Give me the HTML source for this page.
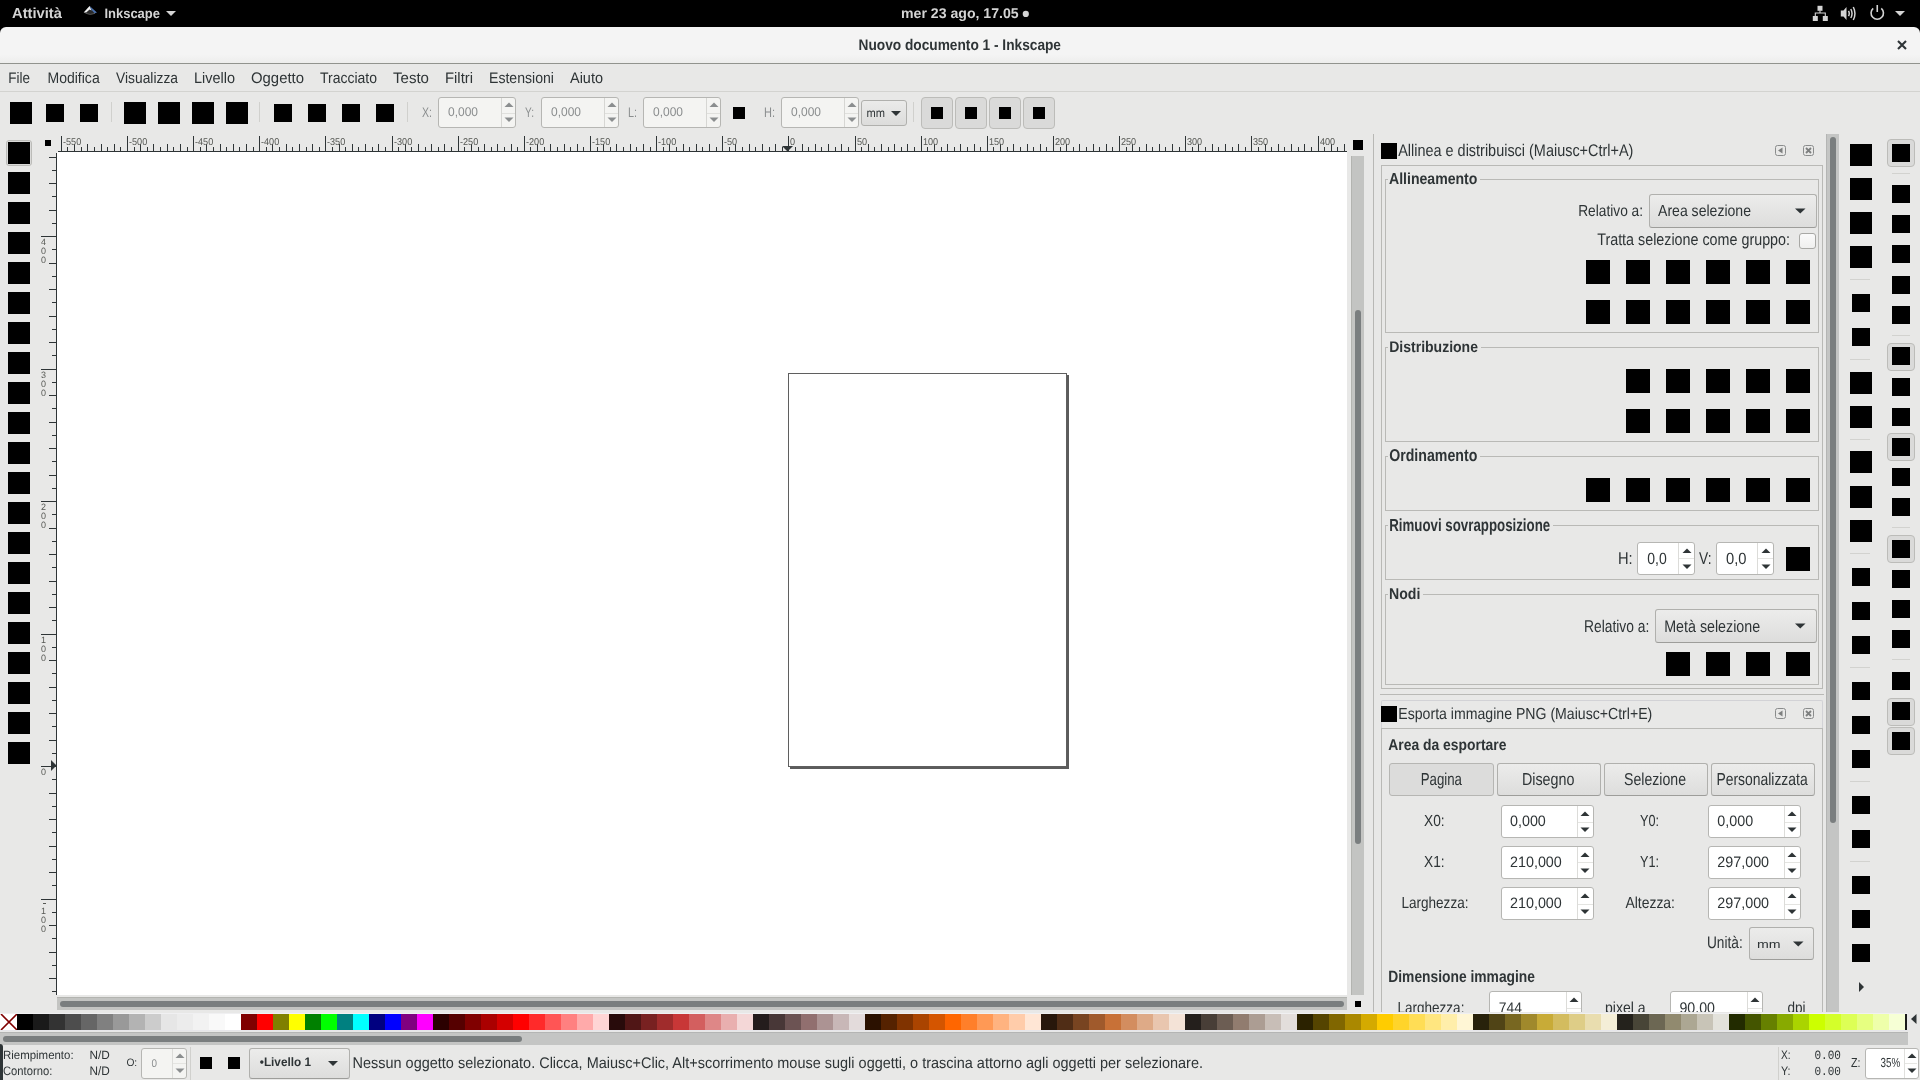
<!DOCTYPE html><html><head><meta charset="utf-8"><style>
html,body{margin:0;padding:0;}
body{width:1920px;height:1080px;overflow:hidden;position:relative;background:#e8e8e7;font-family:'Liberation Sans',sans-serif;}
body>*{position:absolute;margin:0;}
body{text-rendering:geometricPrecision;}
</style></head><body>
<div style="left:0px;top:0px;width:1920px;height:34px;background:#000;"></div>
<svg style="left:83px;top:5px;" width="15" height="12" viewBox="0 0 15 12"><path d="M6.6 1.1 L13.9 7.6 Q7 11.5 0.7 7.4 Z" fill="#2a2a2a"/><path d="M6.6 1.1 L0.7 7.4 L3.2 7.6 L6.6 4.6 L8.6 5.6 Z" fill="#f2f2f2"/><path d="M6.6 1.1 L13.9 7.6 L11.6 8.2 L8.4 4.8 Z" fill="#4a72b0"/><path d="M2.5 8.2 Q7 10.5 12 8.4" stroke="#555" stroke-width="1" fill="none"/></svg>
<svg style="left:166px;top:11px;" width="10" height="6" viewBox="0 0 10 6"><path d="M0 0 H10 L5 5 Z" fill="#d4d4d4"/></svg>
<svg style="left:1022px;top:10px;" width="8" height="8" viewBox="0 0 8 8"><circle cx="3.8" cy="3.9" r="3.1" fill="#d4d4d4"/></svg>
<svg style="left:1812px;top:5px;" width="17" height="17" viewBox="0 0 17 17"><rect x="5.5" y="0.8" width="5" height="5" fill="#d4d4d4"/><rect x="0.8" y="11" width="5" height="5" fill="#d4d4d4"/><rect x="10.8" y="11" width="5" height="5" fill="#d4d4d4"/><path d="M8 5.5 V8 M3.3 11 V8 H13.3 V11" stroke="#d4d4d4" stroke-width="1.1" fill="none"/></svg>
<svg style="left:1840px;top:6px;" width="17" height="15" viewBox="0 0 17 15"><path d="M0.8 4.5 H3.5 L6.5 1 V14 L3.5 10.5 H0.8 Z" fill="#d4d4d4"/><path d="M8.5 4.8 Q10 7.5 8.5 10.2 M10.8 3 Q13.3 7.5 10.8 12 M13.3 1 Q16.6 7.5 13.3 14" stroke="#d4d4d4" stroke-width="1.5" fill="none"/></svg>
<svg style="left:1869px;top:4px;" width="17" height="17" viewBox="0 0 17 17"><path d="M4.2 4.3 A6.2 6.2 0 1 0 12.3 4.3" stroke="#d4d4d4" stroke-width="1.6" fill="none"/><path d="M8.25 1 V8" stroke="#d4d4d4" stroke-width="1.6"/></svg>
<svg style="left:1895px;top:11px;" width="10" height="6" viewBox="0 0 10 6"><path d="M0 0 H10 L5 5 Z" fill="#d4d4d4"/></svg>
<div style="left:0px;top:27px;width:1920px;height:37px;background:linear-gradient(#f4f4f4 75%,#ececeb);border-radius:6px 6px 0 0;"></div>
<div style="left:0px;top:63px;width:1920px;height:1px;background:#91938e;"></div>
<svg style="left:1897px;top:40px;" width="10" height="10" viewBox="0 0 10 10"><path d="M1 1 L9 9 M9 1 L1 9" stroke="#2e3436" stroke-width="2.1"/></svg>
<div style="left:0px;top:91px;width:1920px;height:1px;background:#d3d3d0;"></div>
<div style="left:10px;top:102px;width:22px;height:22px;background:#000;"></div>
<div style="left:46px;top:104px;width:18px;height:18px;background:#000;"></div>
<div style="left:80px;top:104px;width:18px;height:18px;background:#000;"></div>
<div style="left:124px;top:102px;width:22px;height:22px;background:#000;"></div>
<div style="left:158px;top:102px;width:22px;height:22px;background:#000;"></div>
<div style="left:192px;top:102px;width:22px;height:22px;background:#000;"></div>
<div style="left:226px;top:102px;width:22px;height:22px;background:#000;"></div>
<div style="left:274px;top:104px;width:18px;height:18px;background:#000;"></div>
<div style="left:308px;top:104px;width:18px;height:18px;background:#000;"></div>
<div style="left:342px;top:104px;width:18px;height:18px;background:#000;"></div>
<div style="left:376px;top:104px;width:18px;height:18px;background:#000;"></div>
<div style="left:111px;top:102px;width:1px;height:20px;background:#d0d0cd;"></div>
<div style="left:259px;top:102px;width:1px;height:20px;background:#d0d0cd;"></div>
<div style="left:407px;top:102px;width:1px;height:20px;background:#d0d0cd;"></div>
<div style="left:913px;top:102px;width:1px;height:20px;background:#d0d0cd;"></div>
<div style="left:438px;top:97px;width:78px;height:31px;box-sizing:border-box;border:1px solid #b6b6b3;background:#f4f4f2;border-radius:3px;"></div>
<div style="left:501px;top:98px;width:1px;height:29px;background:#d6d6d3;"></div>
<div style="left:502px;top:112.5px;width:13px;height:1px;background:#e0e0dd;"></div>
<svg style="left:503.5px;top:102px;" width="10" height="6" viewBox="0 0 10 6"><path d="M0.5 5 L5 0.5 L9.5 5 Z" fill="#8b8e8f"/></svg>
<svg style="left:503.5px;top:117px;" width="10" height="6" viewBox="0 0 10 6"><path d="M0.5 0.5 L5 5 L9.5 0.5 Z" fill="#8b8e8f"/></svg>
<div style="left:541px;top:97px;width:78px;height:31px;box-sizing:border-box;border:1px solid #b6b6b3;background:#f4f4f2;border-radius:3px;"></div>
<div style="left:604px;top:98px;width:1px;height:29px;background:#d6d6d3;"></div>
<div style="left:605px;top:112.5px;width:13px;height:1px;background:#e0e0dd;"></div>
<svg style="left:606.5px;top:102px;" width="10" height="6" viewBox="0 0 10 6"><path d="M0.5 5 L5 0.5 L9.5 5 Z" fill="#8b8e8f"/></svg>
<svg style="left:606.5px;top:117px;" width="10" height="6" viewBox="0 0 10 6"><path d="M0.5 0.5 L5 5 L9.5 0.5 Z" fill="#8b8e8f"/></svg>
<div style="left:643px;top:97px;width:78px;height:31px;box-sizing:border-box;border:1px solid #b6b6b3;background:#f4f4f2;border-radius:3px;"></div>
<div style="left:706px;top:98px;width:1px;height:29px;background:#d6d6d3;"></div>
<div style="left:707px;top:112.5px;width:13px;height:1px;background:#e0e0dd;"></div>
<svg style="left:708.5px;top:102px;" width="10" height="6" viewBox="0 0 10 6"><path d="M0.5 5 L5 0.5 L9.5 5 Z" fill="#8b8e8f"/></svg>
<svg style="left:708.5px;top:117px;" width="10" height="6" viewBox="0 0 10 6"><path d="M0.5 0.5 L5 5 L9.5 0.5 Z" fill="#8b8e8f"/></svg>
<div style="left:733px;top:107px;width:12px;height:12px;background:#000;"></div>
<div style="left:781px;top:97px;width:78px;height:31px;box-sizing:border-box;border:1px solid #b6b6b3;background:#f4f4f2;border-radius:3px;"></div>
<div style="left:844px;top:98px;width:1px;height:29px;background:#d6d6d3;"></div>
<div style="left:845px;top:112.5px;width:13px;height:1px;background:#e0e0dd;"></div>
<svg style="left:846.5px;top:102px;" width="10" height="6" viewBox="0 0 10 6"><path d="M0.5 5 L5 0.5 L9.5 5 Z" fill="#8b8e8f"/></svg>
<svg style="left:846.5px;top:117px;" width="10" height="6" viewBox="0 0 10 6"><path d="M0.5 0.5 L5 5 L9.5 0.5 Z" fill="#8b8e8f"/></svg>
<div style="left:861px;top:100px;width:46px;height:26px;box-sizing:border-box;border:1px solid #b0b0ad;background:linear-gradient(#ebebea,#dcdcdb);border-radius:3px;"></div>
<svg style="left:891px;top:111px;" width="10" height="5" viewBox="0 0 10 5"><path d="M0 0 H10 L5 5 Z" fill="#2e3436"/></svg>
<div style="left:921px;top:97px;width:32px;height:32px;box-sizing:border-box;border:1px solid #bcbcb9;background:#dadad9;border-radius:4px;"></div>
<div style="left:931px;top:107px;width:12px;height:12px;background:#000;"></div>
<div style="left:955px;top:97px;width:32px;height:32px;box-sizing:border-box;border:1px solid #bcbcb9;background:#dadad9;border-radius:4px;"></div>
<div style="left:965px;top:107px;width:12px;height:12px;background:#000;"></div>
<div style="left:989px;top:97px;width:32px;height:32px;box-sizing:border-box;border:1px solid #bcbcb9;background:#dadad9;border-radius:4px;"></div>
<div style="left:999px;top:107px;width:12px;height:12px;background:#000;"></div>
<div style="left:1023px;top:97px;width:32px;height:32px;box-sizing:border-box;border:1px solid #bcbcb9;background:#dadad9;border-radius:4px;"></div>
<div style="left:1033px;top:107px;width:12px;height:12px;background:#000;"></div>
<div style="left:6px;top:140px;width:26px;height:26px;box-sizing:border-box;border:1px solid #bcbcb9;background:#dadad9;border-radius:3px;"></div>
<div style="left:8px;top:142px;width:22px;height:22px;background:#000;"></div>
<div style="left:8px;top:172px;width:22px;height:22px;background:#000;"></div>
<div style="left:8px;top:202px;width:22px;height:22px;background:#000;"></div>
<div style="left:8px;top:232px;width:22px;height:22px;background:#000;"></div>
<div style="left:8px;top:262px;width:22px;height:22px;background:#000;"></div>
<div style="left:8px;top:292px;width:22px;height:22px;background:#000;"></div>
<div style="left:8px;top:322px;width:22px;height:22px;background:#000;"></div>
<div style="left:8px;top:352px;width:22px;height:22px;background:#000;"></div>
<div style="left:8px;top:382px;width:22px;height:22px;background:#000;"></div>
<div style="left:8px;top:412px;width:22px;height:22px;background:#000;"></div>
<div style="left:8px;top:442px;width:22px;height:22px;background:#000;"></div>
<div style="left:8px;top:472px;width:22px;height:22px;background:#000;"></div>
<div style="left:8px;top:502px;width:22px;height:22px;background:#000;"></div>
<div style="left:8px;top:532px;width:22px;height:22px;background:#000;"></div>
<div style="left:8px;top:562px;width:22px;height:22px;background:#000;"></div>
<div style="left:8px;top:592px;width:22px;height:22px;background:#000;"></div>
<div style="left:8px;top:622px;width:22px;height:22px;background:#000;"></div>
<div style="left:8px;top:652px;width:22px;height:22px;background:#000;"></div>
<div style="left:8px;top:682px;width:22px;height:22px;background:#000;"></div>
<div style="left:8px;top:712px;width:22px;height:22px;background:#000;"></div>
<div style="left:8px;top:742px;width:22px;height:22px;background:#000;"></div>
<div style="left:45px;top:140px;width:6px;height:6px;background:#000;"></div>
<div style="left:58px;top:151px;width:1289px;height:1px;background:#2e3436;"></div>
<svg style="left:0px;top:0px;" width="1400" height="1000" viewBox="0 0 1400 1000"><path d="M61.5 136V151M67.5 147V151M74.5 144V151M81.5 147V151M87.5 144V151M94.5 147V151M101.5 144V151M107.5 147V151M114.5 144V151M120.5 147V151M127.5 136V151M134.5 147V151M140.5 144V151M147.5 147V151M153.5 144V151M160.5 147V151M167.5 144V151M173.5 147V151M180.5 144V151M187.5 147V151M193.5 136V151M200.5 147V151M206.5 144V151M213.5 147V151M220.5 144V151M226.5 147V151M233.5 144V151M239.5 147V151M246.5 144V151M253.5 147V151M259.5 136V151M266.5 147V151M272.5 144V151M279.5 147V151M286.5 144V151M292.5 147V151M299.5 144V151M306.5 147V151M312.5 144V151M319.5 147V151M325.5 136V151M332.5 147V151M339.5 144V151M345.5 147V151M352.5 144V151M358.5 147V151M365.5 144V151M372.5 147V151M378.5 144V151M385.5 147V151M392.5 136V151M398.5 147V151M405.5 144V151M411.5 147V151M418.5 144V151M425.5 147V151M431.5 144V151M438.5 147V151M444.5 144V151M451.5 147V151M458.5 136V151M464.5 147V151M471.5 144V151M478.5 147V151M484.5 144V151M491.5 147V151M497.5 144V151M504.5 147V151M511.5 144V151M517.5 147V151M524.5 136V151M530.5 147V151M537.5 144V151M544.5 147V151M550.5 144V151M557.5 147V151M564.5 144V151M570.5 147V151M577.5 144V151M583.5 147V151M590.5 136V151M597.5 147V151M603.5 144V151M610.5 147V151M616.5 144V151M623.5 147V151M630.5 144V151M636.5 147V151M643.5 144V151M650.5 147V151M656.5 136V151M663.5 147V151M669.5 144V151M676.5 147V151M683.5 144V151M689.5 147V151M696.5 144V151M702.5 147V151M709.5 144V151M716.5 147V151M722.5 136V151M729.5 147V151M735.5 144V151M742.5 147V151M749.5 144V151M755.5 147V151M762.5 144V151M769.5 147V151M775.5 144V151M782.5 147V151M788.5 136V151M795.5 147V151M802.5 144V151M808.5 147V151M815.5 144V151M821.5 147V151M828.5 144V151M835.5 147V151M841.5 144V151M848.5 147V151M855.5 136V151M861.5 147V151M868.5 144V151M874.5 147V151M881.5 144V151M888.5 147V151M894.5 144V151M901.5 147V151M907.5 144V151M914.5 147V151M921.5 136V151M927.5 147V151M934.5 144V151M941.5 147V151M947.5 144V151M954.5 147V151M960.5 144V151M967.5 147V151M974.5 144V151M980.5 147V151M987.5 136V151M993.5 147V151M1000.5 144V151M1007.5 147V151M1013.5 144V151M1020.5 147V151M1027.5 144V151M1033.5 147V151M1040.5 144V151M1046.5 147V151M1053.5 136V151M1060.5 147V151M1066.5 144V151M1073.5 147V151M1079.5 144V151M1086.5 147V151M1093.5 144V151M1099.5 147V151M1106.5 144V151M1112.5 147V151M1119.5 136V151M1126.5 147V151M1132.5 144V151M1139.5 147V151M1146.5 144V151M1152.5 147V151M1159.5 144V151M1165.5 147V151M1172.5 144V151M1179.5 147V151M1185.5 136V151M1192.5 147V151M1198.5 144V151M1205.5 147V151M1212.5 144V151M1218.5 147V151M1225.5 144V151M1232.5 147V151M1238.5 144V151M1245.5 147V151M1251.5 136V151M1258.5 147V151M1265.5 144V151M1271.5 147V151M1278.5 144V151M1284.5 147V151M1291.5 144V151M1298.5 147V151M1304.5 144V151M1311.5 147V151M1318.5 136V151M1324.5 147V151M1331.5 144V151M1337.5 147V151M1344.5 144V151M52 991.5H56M49 978.5H56M52 965.5H56M49 952.5H56M52 938.5H56M49 925.5H56M52 912.5H56M41 899.5H56M52 885.5H56M49 872.5H56M52 859.5H56M49 846.5H56M52 832.5H56M49 819.5H56M52 806.5H56M49 793.5H56M52 779.5H56M41 766.5H56M52 753.5H56M49 740.5H56M52 726.5H56M49 713.5H56M52 700.5H56M49 687.5H56M52 673.5H56M49 660.5H56M52 647.5H56M41 634.5H56M52 620.5H56M49 607.5H56M52 594.5H56M49 581.5H56M52 567.5H56M49 554.5H56M52 541.5H56M49 528.5H56M52 514.5H56M41 501.5H56M52 488.5H56M49 475.5H56M52 461.5H56M49 448.5H56M52 435.5H56M49 422.5H56M52 408.5H56M49 395.5H56M52 382.5H56M41 369.5H56M52 355.5H56M49 342.5H56M52 329.5H56M49 316.5H56M52 302.5H56M49 289.5H56M52 276.5H56M49 263.5H56M52 249.5H56M41 236.5H56M52 223.5H56M49 210.5H56M52 196.5H56M49 183.5H56M52 170.5H56M49 157.5H56" stroke="#2e3436" stroke-width="1" fill="none"/></svg>
<div style="left:56px;top:153px;width:1px;height:842px;background:#2e3436;"></div>
<div style="left:43px;top:903.3px;width:3px;height:1px;background:#555753;"></div>
<svg style="left:782px;top:146px;" width="11" height="6" viewBox="0 0 11 6"><path d="M0 0 H11 L5.5 5.5 Z" fill="#2e3436"/></svg>
<svg style="left:51px;top:760px;" width="6" height="11" viewBox="0 0 6 11"><path d="M0 0 V11 L5.5 5.5 Z" fill="#2e3436"/></svg>
<div style="left:57px;top:152px;width:1290px;height:843px;background:#fff;"></div>
<div style="left:788px;top:373px;width:279px;height:394px;background:#fff;box-sizing:border-box;border:1px solid #5f5f5f;box-shadow:2px 2px 0 #5c5c5c;"></div>
<div style="left:1353px;top:140px;width:10px;height:10px;background:#000;"></div>
<div style="left:1351px;top:156px;width:13px;height:839px;background:#c3c4c2;box-shadow:inset 1px 0 0 #b3b4b0;"></div>
<div style="left:1355px;top:310px;width:6px;height:534px;background:#7a7e7f;border-radius:3px;"></div>
<div style="left:57px;top:997px;width:1290px;height:13px;background:#c3c4c2;box-shadow:inset 0 1px 0 #b3b4b0;"></div>
<div style="left:60px;top:1001px;width:1284px;height:6px;background:#7a7e7f;border-radius:3px;"></div>
<div style="left:1355px;top:1001px;width:6px;height:6px;background:#000;"></div>
<div style="left:1373px;top:134px;width:1px;height:878px;background:#b8b8b5;"></div>
<div style="left:1381px;top:143px;width:16px;height:16px;background:#000;"></div>
<svg style="left:1775px;top:145px;" width="11" height="11" viewBox="0 0 11 11"><rect x="0.5" y="0.5" width="10" height="10" rx="2" fill="none" stroke="#8a8c8c"/><path d="M7.5 2.5 V8.5 L3 5.5 Z" fill="#7d7f7f"/></svg>
<svg style="left:1803px;top:145px;" width="11" height="11" viewBox="0 0 11 11"><rect x="0.5" y="0.5" width="10" height="10" rx="2" fill="none" stroke="#8a8c8c"/><path d="M3 3 L8 8 M8 3 L3 8" stroke="#7d7f7f" stroke-width="1.8"/></svg>
<div style="left:1381px;top:165px;width:442px;height:524px;box-sizing:border-box;border:1px solid #b9b9b6;background:transparent;border-radius:0px;"></div>
<div style="left:1385px;top:179px;width:1px;height:154px;background:#b9b9b6;"></div>
<div style="left:1818px;top:179px;width:1px;height:154px;background:#b9b9b6;"></div>
<div style="left:1385px;top:332px;width:434px;height:1px;background:#b9b9b6;"></div>
<div style="left:1385px;top:179px;width:3px;height:1px;background:#b9b9b6;"></div>
<div style="left:1480.4px;top:179px;width:337.5999999999999px;height:1px;background:#b9b9b6;"></div>
<div style="left:1649px;top:194px;width:168px;height:34px;box-sizing:border-box;border:1px solid #b0b0ad;background:linear-gradient(#ececeb,#dddddc);border-radius:3px;border-bottom-color:#9d9d9a;"></div>
<svg style="left:1794.5px;top:208.0px;" width="11" height="6" viewBox="0 0 11 6"><path d="M0 0.5 H10.5 L5.25 5.5 Z" fill="#2e3436"/></svg>
<div style="left:1799px;top:233px;width:17px;height:16px;box-sizing:border-box;border:1px solid #a8a8a5;background:linear-gradient(#fafafa,#efefee);border-radius:3px;"></div>
<div style="left:1586px;top:260px;width:24px;height:24px;background:#000;"></div>
<div style="left:1626px;top:260px;width:24px;height:24px;background:#000;"></div>
<div style="left:1666px;top:260px;width:24px;height:24px;background:#000;"></div>
<div style="left:1706px;top:260px;width:24px;height:24px;background:#000;"></div>
<div style="left:1746px;top:260px;width:24px;height:24px;background:#000;"></div>
<div style="left:1786px;top:260px;width:24px;height:24px;background:#000;"></div>
<div style="left:1586px;top:300px;width:24px;height:24px;background:#000;"></div>
<div style="left:1626px;top:300px;width:24px;height:24px;background:#000;"></div>
<div style="left:1666px;top:300px;width:24px;height:24px;background:#000;"></div>
<div style="left:1706px;top:300px;width:24px;height:24px;background:#000;"></div>
<div style="left:1746px;top:300px;width:24px;height:24px;background:#000;"></div>
<div style="left:1786px;top:300px;width:24px;height:24px;background:#000;"></div>
<div style="left:1385px;top:347px;width:1px;height:95px;background:#b9b9b6;"></div>
<div style="left:1818px;top:347px;width:1px;height:95px;background:#b9b9b6;"></div>
<div style="left:1385px;top:441px;width:434px;height:1px;background:#b9b9b6;"></div>
<div style="left:1385px;top:347px;width:3px;height:1px;background:#b9b9b6;"></div>
<div style="left:1481px;top:347px;width:337px;height:1px;background:#b9b9b6;"></div>
<div style="left:1626px;top:369px;width:24px;height:24px;background:#000;"></div>
<div style="left:1666px;top:369px;width:24px;height:24px;background:#000;"></div>
<div style="left:1706px;top:369px;width:24px;height:24px;background:#000;"></div>
<div style="left:1746px;top:369px;width:24px;height:24px;background:#000;"></div>
<div style="left:1786px;top:369px;width:24px;height:24px;background:#000;"></div>
<div style="left:1626px;top:409px;width:24px;height:24px;background:#000;"></div>
<div style="left:1666px;top:409px;width:24px;height:24px;background:#000;"></div>
<div style="left:1706px;top:409px;width:24px;height:24px;background:#000;"></div>
<div style="left:1746px;top:409px;width:24px;height:24px;background:#000;"></div>
<div style="left:1786px;top:409px;width:24px;height:24px;background:#000;"></div>
<div style="left:1385px;top:456px;width:1px;height:55px;background:#b9b9b6;"></div>
<div style="left:1818px;top:456px;width:1px;height:55px;background:#b9b9b6;"></div>
<div style="left:1385px;top:510px;width:434px;height:1px;background:#b9b9b6;"></div>
<div style="left:1385px;top:456px;width:3px;height:1px;background:#b9b9b6;"></div>
<div style="left:1480.3px;top:456px;width:337.70000000000005px;height:1px;background:#b9b9b6;"></div>
<div style="left:1586px;top:478px;width:24px;height:24px;background:#000;"></div>
<div style="left:1626px;top:478px;width:24px;height:24px;background:#000;"></div>
<div style="left:1666px;top:478px;width:24px;height:24px;background:#000;"></div>
<div style="left:1706px;top:478px;width:24px;height:24px;background:#000;"></div>
<div style="left:1746px;top:478px;width:24px;height:24px;background:#000;"></div>
<div style="left:1786px;top:478px;width:24px;height:24px;background:#000;"></div>
<div style="left:1385px;top:525px;width:1px;height:55px;background:#b9b9b6;"></div>
<div style="left:1818px;top:525px;width:1px;height:55px;background:#b9b9b6;"></div>
<div style="left:1385px;top:579px;width:434px;height:1px;background:#b9b9b6;"></div>
<div style="left:1385px;top:525px;width:3px;height:1px;background:#b9b9b6;"></div>
<div style="left:1553.2px;top:525px;width:264.79999999999995px;height:1px;background:#b9b9b6;"></div>
<div style="left:1637px;top:542px;width:58px;height:33px;box-sizing:border-box;border:1px solid #b6b6b3;background:#fff;border-radius:3px;"></div>
<div style="left:1678px;top:543px;width:1px;height:31px;background:#dcdcd9;"></div>
<div style="left:1679px;top:558px;width:15px;height:1px;background:#e4e4e1;"></div>
<svg style="left:1681.5px;top:548px;" width="10" height="6" viewBox="0 0 10 6"><path d="M0.5 5 L5 0.5 L9.5 5 Z" fill="#2e3436"/></svg>
<svg style="left:1681.5px;top:564px;" width="10" height="6" viewBox="0 0 10 6"><path d="M0.5 0.5 L5 5 L9.5 0.5 Z" fill="#2e3436"/></svg>
<div style="left:1716px;top:542px;width:58px;height:33px;box-sizing:border-box;border:1px solid #b6b6b3;background:#fff;border-radius:3px;"></div>
<div style="left:1757px;top:543px;width:1px;height:31px;background:#dcdcd9;"></div>
<div style="left:1758px;top:558px;width:15px;height:1px;background:#e4e4e1;"></div>
<svg style="left:1760.5px;top:548px;" width="10" height="6" viewBox="0 0 10 6"><path d="M0.5 5 L5 0.5 L9.5 5 Z" fill="#2e3436"/></svg>
<svg style="left:1760.5px;top:564px;" width="10" height="6" viewBox="0 0 10 6"><path d="M0.5 0.5 L5 5 L9.5 0.5 Z" fill="#2e3436"/></svg>
<div style="left:1786px;top:547px;width:24px;height:24px;background:#000;"></div>
<div style="left:1385px;top:594px;width:1px;height:91px;background:#b9b9b6;"></div>
<div style="left:1818px;top:594px;width:1px;height:91px;background:#b9b9b6;"></div>
<div style="left:1385px;top:684px;width:434px;height:1px;background:#b9b9b6;"></div>
<div style="left:1385px;top:594px;width:3px;height:1px;background:#b9b9b6;"></div>
<div style="left:1423.4px;top:594px;width:394.5999999999999px;height:1px;background:#b9b9b6;"></div>
<div style="left:1655px;top:609px;width:162px;height:34px;box-sizing:border-box;border:1px solid #b0b0ad;background:linear-gradient(#ececeb,#dddddc);border-radius:3px;border-bottom-color:#9d9d9a;"></div>
<svg style="left:1794.5px;top:623.0px;" width="11" height="6" viewBox="0 0 11 6"><path d="M0 0.5 H10.5 L5.25 5.5 Z" fill="#2e3436"/></svg>
<div style="left:1666px;top:652px;width:24px;height:24px;background:#000;"></div>
<div style="left:1706px;top:652px;width:24px;height:24px;background:#000;"></div>
<div style="left:1746px;top:652px;width:24px;height:24px;background:#000;"></div>
<div style="left:1786px;top:652px;width:24px;height:24px;background:#000;"></div>
<div style="left:1380px;top:694px;width:444px;height:1px;background:#b9b9b6;"></div>
<div style="left:1381px;top:700px;width:442px;height:29px;background:transparent;box-sizing:border-box;border:1px solid #d2d2d6;border-bottom:none;border-radius:2px 2px 0 0;"></div>
<div style="left:1381px;top:706px;width:16px;height:16px;background:#000;"></div>
<svg style="left:1775px;top:708px;" width="11" height="11" viewBox="0 0 11 11"><rect x="0.5" y="0.5" width="10" height="10" rx="2" fill="none" stroke="#8a8c8c"/><path d="M7.5 2.5 V8.5 L3 5.5 Z" fill="#7d7f7f"/></svg>
<svg style="left:1803px;top:708px;" width="11" height="11" viewBox="0 0 11 11"><rect x="0.5" y="0.5" width="10" height="10" rx="2" fill="none" stroke="#8a8c8c"/><path d="M3 3 L8 8 M8 3 L3 8" stroke="#7d7f7f" stroke-width="1.8"/></svg>
<div style="left:1381px;top:728px;width:442px;height:284px;background:transparent;box-sizing:border-box;border:1px solid #b9b9b6;border-bottom:none;"></div>
<div style="left:1389px;top:763px;width:105px;height:33px;box-sizing:border-box;border:1px solid #b6b6b3;background:#dcdcdb;border-radius:3px;"></div>
<div style="left:1496.5px;top:763px;width:104.5px;height:33px;box-sizing:border-box;border:1px solid #b0b0ad;background:linear-gradient(#ececeb,#dddddc);border-radius:3px;border-bottom-color:#9d9d9a;"></div>
<div style="left:1603.5px;top:763px;width:104.5px;height:33px;box-sizing:border-box;border:1px solid #b0b0ad;background:linear-gradient(#ececeb,#dddddc);border-radius:3px;border-bottom-color:#9d9d9a;"></div>
<div style="left:1710.5px;top:763px;width:104.5px;height:33px;box-sizing:border-box;border:1px solid #b0b0ad;background:linear-gradient(#ececeb,#dddddc);border-radius:3px;border-bottom-color:#9d9d9a;"></div>
<div style="left:1500.5px;top:805px;width:93.0px;height:33px;box-sizing:border-box;border:1px solid #b6b6b3;background:#fff;border-radius:3px;"></div>
<div style="left:1577px;top:806px;width:1px;height:31px;background:#dcdcd9;"></div>
<div style="left:1578px;top:822px;width:14.5px;height:1px;background:#e4e4e1;"></div>
<svg style="left:1580.25px;top:811px;" width="10" height="6" viewBox="0 0 10 6"><path d="M0.5 5 L5 0.5 L9.5 5 Z" fill="#2e3436"/></svg>
<svg style="left:1580.25px;top:827px;" width="10" height="6" viewBox="0 0 10 6"><path d="M0.5 0.5 L5 5 L9.5 0.5 Z" fill="#2e3436"/></svg>
<div style="left:1707.5px;top:805px;width:93.0px;height:33px;box-sizing:border-box;border:1px solid #b6b6b3;background:#fff;border-radius:3px;"></div>
<div style="left:1784px;top:806px;width:1px;height:31px;background:#dcdcd9;"></div>
<div style="left:1785px;top:822px;width:14.5px;height:1px;background:#e4e4e1;"></div>
<svg style="left:1787.25px;top:811px;" width="10" height="6" viewBox="0 0 10 6"><path d="M0.5 5 L5 0.5 L9.5 5 Z" fill="#2e3436"/></svg>
<svg style="left:1787.25px;top:827px;" width="10" height="6" viewBox="0 0 10 6"><path d="M0.5 0.5 L5 5 L9.5 0.5 Z" fill="#2e3436"/></svg>
<div style="left:1500.5px;top:846px;width:93.0px;height:33px;box-sizing:border-box;border:1px solid #b6b6b3;background:#fff;border-radius:3px;"></div>
<div style="left:1577px;top:847px;width:1px;height:31px;background:#dcdcd9;"></div>
<div style="left:1578px;top:862px;width:14.5px;height:1px;background:#e4e4e1;"></div>
<svg style="left:1580.25px;top:852px;" width="10" height="6" viewBox="0 0 10 6"><path d="M0.5 5 L5 0.5 L9.5 5 Z" fill="#2e3436"/></svg>
<svg style="left:1580.25px;top:868px;" width="10" height="6" viewBox="0 0 10 6"><path d="M0.5 0.5 L5 5 L9.5 0.5 Z" fill="#2e3436"/></svg>
<div style="left:1707.5px;top:846px;width:93.0px;height:33px;box-sizing:border-box;border:1px solid #b6b6b3;background:#fff;border-radius:3px;"></div>
<div style="left:1784px;top:847px;width:1px;height:31px;background:#dcdcd9;"></div>
<div style="left:1785px;top:862px;width:14.5px;height:1px;background:#e4e4e1;"></div>
<svg style="left:1787.25px;top:852px;" width="10" height="6" viewBox="0 0 10 6"><path d="M0.5 5 L5 0.5 L9.5 5 Z" fill="#2e3436"/></svg>
<svg style="left:1787.25px;top:868px;" width="10" height="6" viewBox="0 0 10 6"><path d="M0.5 0.5 L5 5 L9.5 0.5 Z" fill="#2e3436"/></svg>
<div style="left:1500.5px;top:887px;width:93.0px;height:33px;box-sizing:border-box;border:1px solid #b6b6b3;background:#fff;border-radius:3px;"></div>
<div style="left:1577px;top:888px;width:1px;height:31px;background:#dcdcd9;"></div>
<div style="left:1578px;top:904px;width:14.5px;height:1px;background:#e4e4e1;"></div>
<svg style="left:1580.25px;top:893px;" width="10" height="6" viewBox="0 0 10 6"><path d="M0.5 5 L5 0.5 L9.5 5 Z" fill="#2e3436"/></svg>
<svg style="left:1580.25px;top:909px;" width="10" height="6" viewBox="0 0 10 6"><path d="M0.5 0.5 L5 5 L9.5 0.5 Z" fill="#2e3436"/></svg>
<div style="left:1707.5px;top:887px;width:93.0px;height:33px;box-sizing:border-box;border:1px solid #b6b6b3;background:#fff;border-radius:3px;"></div>
<div style="left:1784px;top:888px;width:1px;height:31px;background:#dcdcd9;"></div>
<div style="left:1785px;top:904px;width:14.5px;height:1px;background:#e4e4e1;"></div>
<svg style="left:1787.25px;top:893px;" width="10" height="6" viewBox="0 0 10 6"><path d="M0.5 5 L5 0.5 L9.5 5 Z" fill="#2e3436"/></svg>
<svg style="left:1787.25px;top:909px;" width="10" height="6" viewBox="0 0 10 6"><path d="M0.5 0.5 L5 5 L9.5 0.5 Z" fill="#2e3436"/></svg>
<div style="left:1748.5px;top:927px;width:65.5px;height:33px;box-sizing:border-box;border:1px solid #b0b0ad;background:linear-gradient(#ececeb,#dddddc);border-radius:3px;border-bottom-color:#9d9d9a;"></div>
<svg style="left:1792.5px;top:940.5px;" width="11" height="6" viewBox="0 0 11 6"><path d="M0 0.5 H10.5 L5.25 5.5 Z" fill="#2e3436"/></svg>
<div style="left:1488.5px;top:991px;width:93.0px;height:34px;box-sizing:border-box;border:1px solid #b6b6b3;background:#fff;border-radius:3px;"></div>
<div style="left:1565.5px;top:992px;width:1px;height:32px;background:#dcdcd9;"></div>
<div style="left:1566.5px;top:1008px;width:14.0px;height:1px;background:#e4e4e1;"></div>
<svg style="left:1568.5px;top:997px;" width="10" height="6" viewBox="0 0 10 6"><path d="M0.5 5 L5 0.5 L9.5 5 Z" fill="#2e3436"/></svg>
<svg style="left:1568.5px;top:1014px;" width="10" height="6" viewBox="0 0 10 6"><path d="M0.5 0.5 L5 5 L9.5 0.5 Z" fill="#2e3436"/></svg>
<div style="left:1669.5px;top:991px;width:93.0px;height:34px;box-sizing:border-box;border:1px solid #b6b6b3;background:#fff;border-radius:3px;"></div>
<div style="left:1746.5px;top:992px;width:1px;height:32px;background:#dcdcd9;"></div>
<div style="left:1747.5px;top:1008px;width:14.0px;height:1px;background:#e4e4e1;"></div>
<svg style="left:1749.5px;top:997px;" width="10" height="6" viewBox="0 0 10 6"><path d="M0.5 5 L5 0.5 L9.5 5 Z" fill="#2e3436"/></svg>
<svg style="left:1749.5px;top:1014px;" width="10" height="6" viewBox="0 0 10 6"><path d="M0.5 0.5 L5 5 L9.5 0.5 Z" fill="#2e3436"/></svg>
<div style="left:1381px;top:1012px;width:442px;height:2px;background:#e8e8e7;"></div>
<div style="left:1826px;top:134px;width:13px;height:878px;background:#c4c5c4;box-shadow:inset 1px 0 0 #b4b5b4;"></div>
<div style="left:1830px;top:137px;width:6px;height:686px;background:#7a7e7f;border-radius:3px;"></div>
<div style="left:1850px;top:144px;width:22px;height:22px;background:#000;"></div>
<div style="left:1850px;top:178px;width:22px;height:22px;background:#000;"></div>
<div style="left:1850px;top:212px;width:22px;height:22px;background:#000;"></div>
<div style="left:1850px;top:246px;width:22px;height:22px;background:#000;"></div>
<div style="left:1852px;top:294px;width:18px;height:18px;background:#000;"></div>
<div style="left:1852px;top:328px;width:18px;height:18px;background:#000;"></div>
<div style="left:1850px;top:372px;width:22px;height:22px;background:#000;"></div>
<div style="left:1850px;top:406px;width:22px;height:22px;background:#000;"></div>
<div style="left:1850px;top:451px;width:22px;height:22px;background:#000;"></div>
<div style="left:1850px;top:486px;width:22px;height:22px;background:#000;"></div>
<div style="left:1850px;top:520px;width:22px;height:22px;background:#000;"></div>
<div style="left:1852px;top:568px;width:18px;height:18px;background:#000;"></div>
<div style="left:1852px;top:602px;width:18px;height:18px;background:#000;"></div>
<div style="left:1852px;top:636px;width:18px;height:18px;background:#000;"></div>
<div style="left:1852px;top:682px;width:18px;height:18px;background:#000;"></div>
<div style="left:1852px;top:716px;width:18px;height:18px;background:#000;"></div>
<div style="left:1852px;top:750px;width:18px;height:18px;background:#000;"></div>
<div style="left:1852px;top:796px;width:18px;height:18px;background:#000;"></div>
<div style="left:1852px;top:830px;width:18px;height:18px;background:#000;"></div>
<div style="left:1852px;top:876px;width:18px;height:18px;background:#000;"></div>
<div style="left:1852px;top:910px;width:18px;height:18px;background:#000;"></div>
<div style="left:1852px;top:944px;width:18px;height:18px;background:#000;"></div>
<div style="left:1850px;top:279px;width:20px;height:1px;background:#d2d2cf;"></div>
<div style="left:1850px;top:359px;width:20px;height:1px;background:#d2d2cf;"></div>
<div style="left:1850px;top:439px;width:20px;height:1px;background:#d2d2cf;"></div>
<div style="left:1850px;top:553px;width:20px;height:1px;background:#d2d2cf;"></div>
<div style="left:1850px;top:667px;width:20px;height:1px;background:#d2d2cf;"></div>
<div style="left:1850px;top:781px;width:20px;height:1px;background:#d2d2cf;"></div>
<div style="left:1850px;top:861px;width:20px;height:1px;background:#d2d2cf;"></div>
<svg style="left:1859px;top:982px;" width="6" height="10" viewBox="0 0 6 10"><path d="M0 0 L5 5 L0 10 Z" fill="#2e3436"/></svg>
<div style="left:1887px;top:139px;width:28px;height:28px;box-sizing:border-box;border:1px solid #bcbcb9;background:#dadad9;border-radius:4px;"></div>
<div style="left:1887px;top:343px;width:28px;height:28px;box-sizing:border-box;border:1px solid #bcbcb9;background:#dadad9;border-radius:4px;"></div>
<div style="left:1887px;top:433px;width:28px;height:28px;box-sizing:border-box;border:1px solid #bcbcb9;background:#dadad9;border-radius:4px;"></div>
<div style="left:1887px;top:535px;width:28px;height:28px;box-sizing:border-box;border:1px solid #bcbcb9;background:#dadad9;border-radius:4px;"></div>
<div style="left:1887px;top:698px;width:28px;height:28px;box-sizing:border-box;border:1px solid #bcbcb9;background:#dadad9;border-radius:4px;"></div>
<div style="left:1887px;top:727px;width:28px;height:28px;box-sizing:border-box;border:1px solid #bcbcb9;background:#dadad9;border-radius:4px;"></div>
<div style="left:1892px;top:144px;width:18px;height:18px;background:#000;"></div>
<div style="left:1892px;top:185px;width:18px;height:18px;background:#000;"></div>
<div style="left:1892px;top:215px;width:18px;height:18px;background:#000;"></div>
<div style="left:1892px;top:245px;width:18px;height:18px;background:#000;"></div>
<div style="left:1892px;top:276px;width:18px;height:18px;background:#000;"></div>
<div style="left:1892px;top:306px;width:18px;height:18px;background:#000;"></div>
<div style="left:1892px;top:347px;width:18px;height:18px;background:#000;"></div>
<div style="left:1892px;top:378px;width:18px;height:18px;background:#000;"></div>
<div style="left:1892px;top:408px;width:18px;height:18px;background:#000;"></div>
<div style="left:1892px;top:438px;width:18px;height:18px;background:#000;"></div>
<div style="left:1892px;top:468px;width:18px;height:18px;background:#000;"></div>
<div style="left:1892px;top:498px;width:18px;height:18px;background:#000;"></div>
<div style="left:1892px;top:540px;width:18px;height:18px;background:#000;"></div>
<div style="left:1892px;top:570px;width:18px;height:18px;background:#000;"></div>
<div style="left:1892px;top:600px;width:18px;height:18px;background:#000;"></div>
<div style="left:1892px;top:630px;width:18px;height:18px;background:#000;"></div>
<div style="left:1892px;top:672px;width:18px;height:18px;background:#000;"></div>
<div style="left:1892px;top:702px;width:18px;height:18px;background:#000;"></div>
<div style="left:1892px;top:732px;width:18px;height:18px;background:#000;"></div>
<div style="left:1892px;top:173px;width:18px;height:1px;background:#d2d2cf;"></div>
<div style="left:1892px;top:335px;width:18px;height:1px;background:#d2d2cf;"></div>
<div style="left:1892px;top:527px;width:18px;height:1px;background:#d2d2cf;"></div>
<div style="left:1892px;top:659px;width:18px;height:1px;background:#d2d2cf;"></div>
<div style="left:0px;top:1013px;width:1908px;height:1px;background:#f0f0f2;"></div>
<div style="left:0px;top:1030px;width:1908px;height:1px;background:#e6e6ea;"></div>
<svg style="left:0px;top:1014px;" width="1905" height="16" viewBox="0 0 1905 16"><rect x="0" y="0" width="17" height="16" fill="#fff"/><path d="M1 0 L17 16 M17 0 L1 16" stroke="#800000" stroke-width="1.6"/><rect x="17" y="0" width="16" height="16" fill="#000000"/><rect x="33" y="0" width="16" height="16" fill="#1A1A1A"/><rect x="49" y="0" width="16" height="16" fill="#333333"/><rect x="65" y="0" width="16" height="16" fill="#4D4D4D"/><rect x="81" y="0" width="16" height="16" fill="#666666"/><rect x="97" y="0" width="16" height="16" fill="#808080"/><rect x="113" y="0" width="16" height="16" fill="#999999"/><rect x="129" y="0" width="16" height="16" fill="#B3B3B3"/><rect x="145" y="0" width="16" height="16" fill="#CCCCCC"/><rect x="161" y="0" width="16" height="16" fill="#E6E6E6"/><rect x="177" y="0" width="16" height="16" fill="#ECECEC"/><rect x="193" y="0" width="16" height="16" fill="#F2F2F2"/><rect x="209" y="0" width="16" height="16" fill="#F9F9F9"/><rect x="225" y="0" width="16" height="16" fill="#FFFFFF"/><rect x="241" y="0" width="16" height="16" fill="#800000"/><rect x="257" y="0" width="16" height="16" fill="#FF0000"/><rect x="273" y="0" width="16" height="16" fill="#808000"/><rect x="289" y="0" width="16" height="16" fill="#FFFF00"/><rect x="305" y="0" width="16" height="16" fill="#008000"/><rect x="321" y="0" width="16" height="16" fill="#00FF00"/><rect x="337" y="0" width="16" height="16" fill="#008080"/><rect x="353" y="0" width="16" height="16" fill="#00FFFF"/><rect x="369" y="0" width="16" height="16" fill="#000080"/><rect x="385" y="0" width="16" height="16" fill="#0000FF"/><rect x="401" y="0" width="16" height="16" fill="#800080"/><rect x="417" y="0" width="16" height="16" fill="#FF00FF"/><rect x="433" y="0" width="16" height="16" fill="#2B0000"/><rect x="449" y="0" width="16" height="16" fill="#550000"/><rect x="465" y="0" width="16" height="16" fill="#800000"/><rect x="481" y="0" width="16" height="16" fill="#AA0000"/><rect x="497" y="0" width="16" height="16" fill="#D40000"/><rect x="513" y="0" width="16" height="16" fill="#FF0000"/><rect x="529" y="0" width="16" height="16" fill="#FF2A2A"/><rect x="545" y="0" width="16" height="16" fill="#FF5555"/><rect x="561" y="0" width="16" height="16" fill="#FF8080"/><rect x="577" y="0" width="16" height="16" fill="#FFAAAA"/><rect x="593" y="0" width="16" height="16" fill="#FFD5D5"/><rect x="609" y="0" width="16" height="16" fill="#280B0B"/><rect x="625" y="0" width="16" height="16" fill="#501616"/><rect x="641" y="0" width="16" height="16" fill="#782121"/><rect x="657" y="0" width="16" height="16" fill="#A02C2C"/><rect x="673" y="0" width="16" height="16" fill="#C83737"/><rect x="689" y="0" width="16" height="16" fill="#D35F5F"/><rect x="705" y="0" width="16" height="16" fill="#DE8787"/><rect x="721" y="0" width="16" height="16" fill="#E9AFAF"/><rect x="737" y="0" width="16" height="16" fill="#F4D7D7"/><rect x="753" y="0" width="16" height="16" fill="#241C1C"/><rect x="769" y="0" width="16" height="16" fill="#483737"/><rect x="785" y="0" width="16" height="16" fill="#6C5353"/><rect x="801" y="0" width="16" height="16" fill="#916F6F"/><rect x="817" y="0" width="16" height="16" fill="#AC9393"/><rect x="833" y="0" width="16" height="16" fill="#C8B7B7"/><rect x="849" y="0" width="16" height="16" fill="#E3DBDB"/><rect x="865" y="0" width="16" height="16" fill="#2B1100"/><rect x="881" y="0" width="16" height="16" fill="#552200"/><rect x="897" y="0" width="16" height="16" fill="#803300"/><rect x="913" y="0" width="16" height="16" fill="#AA4400"/><rect x="929" y="0" width="16" height="16" fill="#D45500"/><rect x="945" y="0" width="16" height="16" fill="#FF6600"/><rect x="961" y="0" width="16" height="16" fill="#FF7F2A"/><rect x="977" y="0" width="16" height="16" fill="#FF9955"/><rect x="993" y="0" width="16" height="16" fill="#FFB380"/><rect x="1009" y="0" width="16" height="16" fill="#FFCCAA"/><rect x="1025" y="0" width="16" height="16" fill="#FFE6D5"/><rect x="1041" y="0" width="16" height="16" fill="#28170B"/><rect x="1057" y="0" width="16" height="16" fill="#502D16"/><rect x="1073" y="0" width="16" height="16" fill="#784421"/><rect x="1089" y="0" width="16" height="16" fill="#A05A2C"/><rect x="1105" y="0" width="16" height="16" fill="#C87137"/><rect x="1121" y="0" width="16" height="16" fill="#D38D5F"/><rect x="1137" y="0" width="16" height="16" fill="#DEAA87"/><rect x="1153" y="0" width="16" height="16" fill="#E9C6AF"/><rect x="1169" y="0" width="16" height="16" fill="#F4E3D7"/><rect x="1185" y="0" width="16" height="16" fill="#241F1C"/><rect x="1201" y="0" width="16" height="16" fill="#483E37"/><rect x="1217" y="0" width="16" height="16" fill="#6C5D53"/><rect x="1233" y="0" width="16" height="16" fill="#917C6F"/><rect x="1249" y="0" width="16" height="16" fill="#AC9D93"/><rect x="1265" y="0" width="16" height="16" fill="#C8BEB7"/><rect x="1281" y="0" width="16" height="16" fill="#E3DEDB"/><rect x="1297" y="0" width="16" height="16" fill="#2B2200"/><rect x="1313" y="0" width="16" height="16" fill="#554400"/><rect x="1329" y="0" width="16" height="16" fill="#806600"/><rect x="1345" y="0" width="16" height="16" fill="#AA8800"/><rect x="1361" y="0" width="16" height="16" fill="#D4AA00"/><rect x="1377" y="0" width="16" height="16" fill="#FFCC00"/><rect x="1393" y="0" width="16" height="16" fill="#FFD42A"/><rect x="1409" y="0" width="16" height="16" fill="#FFDD55"/><rect x="1425" y="0" width="16" height="16" fill="#FFE680"/><rect x="1441" y="0" width="16" height="16" fill="#FFEEAA"/><rect x="1457" y="0" width="16" height="16" fill="#FFF6D5"/><rect x="1473" y="0" width="16" height="16" fill="#28220B"/><rect x="1489" y="0" width="16" height="16" fill="#504416"/><rect x="1505" y="0" width="16" height="16" fill="#786721"/><rect x="1521" y="0" width="16" height="16" fill="#A0892C"/><rect x="1537" y="0" width="16" height="16" fill="#C8AB37"/><rect x="1553" y="0" width="16" height="16" fill="#D3BC5F"/><rect x="1569" y="0" width="16" height="16" fill="#DECD87"/><rect x="1585" y="0" width="16" height="16" fill="#E9DDAF"/><rect x="1601" y="0" width="16" height="16" fill="#F4EED7"/><rect x="1617" y="0" width="16" height="16" fill="#24221C"/><rect x="1633" y="0" width="16" height="16" fill="#484537"/><rect x="1649" y="0" width="16" height="16" fill="#6C6753"/><rect x="1665" y="0" width="16" height="16" fill="#918A6F"/><rect x="1681" y="0" width="16" height="16" fill="#ACA793"/><rect x="1697" y="0" width="16" height="16" fill="#C8C4B7"/><rect x="1713" y="0" width="16" height="16" fill="#E3E2DB"/><rect x="1729" y="0" width="16" height="16" fill="#222B00"/><rect x="1745" y="0" width="16" height="16" fill="#445500"/><rect x="1761" y="0" width="16" height="16" fill="#668000"/><rect x="1777" y="0" width="16" height="16" fill="#88AA00"/><rect x="1793" y="0" width="16" height="16" fill="#AAD400"/><rect x="1809" y="0" width="16" height="16" fill="#CCFF00"/><rect x="1825" y="0" width="16" height="16" fill="#D4FF2A"/><rect x="1841" y="0" width="16" height="16" fill="#DDFF55"/><rect x="1857" y="0" width="16" height="16" fill="#E6FF80"/><rect x="1873" y="0" width="16" height="16" fill="#EEFFAA"/><rect x="1889" y="0" width="16" height="16" fill="#F6FFD5"/></svg>
<div style="left:1905px;top:1014px;width:2px;height:16px;background:#1b1b1b;"></div>
<svg style="left:1911px;top:1014px;" width="6" height="10" viewBox="0 0 6 10"><path d="M5.5 0 L0 5 L5.5 10 Z" fill="#2e3436"/></svg>
<div style="left:0px;top:1032px;width:1908px;height:13px;background:#c4c5c4;box-shadow:inset 0 1px 0 #b4b5b4;"></div>
<div style="left:3px;top:1036px;width:519px;height:6px;background:#7a7e7f;border-radius:3px;"></div>
<div style="left:0px;top:1044px;width:3px;height:36px;background:#2e3436;border-radius:0 3px 0 0;"></div>
<div style="left:141px;top:1048px;width:46px;height:31px;box-sizing:border-box;border:1px solid #b6b6b3;background:#f4f4f2;border-radius:3px;"></div>
<div style="left:172px;top:1049px;width:1px;height:29px;background:#dcdcd9;"></div>
<div style="left:173px;top:1063px;width:13px;height:1px;background:#e4e4e1;"></div>
<svg style="left:174.5px;top:1053px;" width="10" height="6" viewBox="0 0 10 6"><path d="M0.5 5 L5 0.5 L9.5 5 Z" fill="#8b8e8f"/></svg>
<svg style="left:174.5px;top:1068px;" width="10" height="6" viewBox="0 0 10 6"><path d="M0.5 0.5 L5 5 L9.5 0.5 Z" fill="#8b8e8f"/></svg>
<div style="left:190px;top:1047px;width:1px;height:33px;background:#d0d0cd;"></div>
<div style="left:200px;top:1057px;width:12px;height:12px;background:#000;"></div>
<div style="left:228px;top:1057px;width:12px;height:12px;background:#000;"></div>
<div style="left:249px;top:1048px;width:101px;height:31px;box-sizing:border-box;border:1px solid #b0b0ad;background:linear-gradient(#ececeb,#dddddc);border-radius:3px;border-bottom-color:#9d9d9a;"></div>
<svg style="left:328px;top:1061px;" width="10" height="5" viewBox="0 0 10 5"><path d="M0 0 H10 L5 5 Z" fill="#2e3436"/></svg>
<div style="left:1778px;top:1047px;width:1px;height:33px;background:#d0d0cd;"></div>
<div style="left:1864.5px;top:1048px;width:54px;height:31px;box-sizing:border-box;border:1px solid #b6b6b3;background:#fff;border-radius:3px;"></div>
<div style="left:1904px;top:1049px;width:1px;height:29px;background:#e0e0dd;"></div>
<div style="left:1905px;top:1063px;width:12px;height:1px;background:#e6e6e3;"></div>
<svg style="left:1906.5px;top:1053px;" width="10" height="6" viewBox="0 0 10 6"><path d="M0.5 5 L5 0.5 L9.5 5 Z" fill="#2e3436"/></svg>
<svg style="left:1906.5px;top:1068px;" width="10" height="6" viewBox="0 0 10 6"><path d="M0.5 0.5 L5 5 L9.5 0.5 Z" fill="#2e3436"/></svg>
<svg style="left:0;top:0;text-rendering:geometricPrecision;will-change:transform" width="1920" height="1080"><text x="12.00" y="18.10" font-family="Liberation Sans" font-weight="700" font-size="14.53" fill="#d4d4d4" textLength="49.96" lengthAdjust="spacingAndGlyphs" >Attività</text><text x="104.40" y="18.10" font-family="Liberation Sans" font-weight="700" font-size="13.59" fill="#d4d4d4" textLength="55.60" lengthAdjust="spacingAndGlyphs" >Inkscape</text><text x="901.00" y="18.00" font-family="Liberation Sans" font-weight="700" font-size="14.12" fill="#d4d4d4" >mer 23 ago, 17.05</text><text x="858.50" y="50.00" font-family="Liberation Sans" font-weight="700" font-size="15.41" fill="#2e3436" textLength="202.50" lengthAdjust="spacingAndGlyphs" >Nuovo documento 1 - Inkscape</text><text x="8.30" y="82.75" font-family="Liberation Sans" font-weight="400" font-size="15.26" fill="#2e3436" textLength="21.70" lengthAdjust="spacingAndGlyphs" >File</text><text x="47.50" y="82.75" font-family="Liberation Sans" font-weight="400" font-size="15.26" fill="#2e3436" textLength="52.18" lengthAdjust="spacingAndGlyphs" >Modifica</text><text x="116.00" y="82.75" font-family="Liberation Sans" font-weight="400" font-size="15.26" fill="#2e3436" textLength="61.99" lengthAdjust="spacingAndGlyphs" >Visualizza</text><text x="194.00" y="82.75" font-family="Liberation Sans" font-weight="400" font-size="15.26" fill="#2e3436" textLength="41.00" lengthAdjust="spacingAndGlyphs" >Livello</text><text x="251.00" y="82.75" font-family="Liberation Sans" font-weight="400" font-size="15.26" fill="#2e3436" textLength="53.00" lengthAdjust="spacingAndGlyphs" >Oggetto</text><text x="320.00" y="82.75" font-family="Liberation Sans" font-weight="400" font-size="15.26" fill="#2e3436" textLength="57.00" lengthAdjust="spacingAndGlyphs" >Tracciato</text><text x="393.00" y="82.75" font-family="Liberation Sans" font-weight="400" font-size="15.26" fill="#2e3436" textLength="36.00" lengthAdjust="spacingAndGlyphs" >Testo</text><text x="445.00" y="82.75" font-family="Liberation Sans" font-weight="400" font-size="15.26" fill="#2e3436" textLength="28.00" lengthAdjust="spacingAndGlyphs" >Filtri</text><text x="489.00" y="82.75" font-family="Liberation Sans" font-weight="400" font-size="15.26" fill="#2e3436" textLength="65.00" lengthAdjust="spacingAndGlyphs" >Estensioni</text><text x="570.00" y="82.75" font-family="Liberation Sans" font-weight="400" font-size="15.26" fill="#2e3436" textLength="33.00" lengthAdjust="spacingAndGlyphs" >Aiuto</text><text x="422.00" y="117.00" font-family="Liberation Sans" font-weight="400" font-size="13.81" fill="#8b8e8f" textLength="10.00" lengthAdjust="spacingAndGlyphs" >X:</text><text x="448.00" y="116.00" font-family="Liberation Sans" font-weight="400" font-size="12.71" fill="#8b8e8f" textLength="30.01" lengthAdjust="spacingAndGlyphs" >0,000</text><text x="525.00" y="117.00" font-family="Liberation Sans" font-weight="400" font-size="13.81" fill="#8b8e8f" textLength="9.00" lengthAdjust="spacingAndGlyphs" >Y:</text><text x="551.00" y="116.00" font-family="Liberation Sans" font-weight="400" font-size="12.71" fill="#8b8e8f" textLength="30.01" lengthAdjust="spacingAndGlyphs" >0,000</text><text x="628.00" y="117.00" font-family="Liberation Sans" font-weight="400" font-size="13.81" fill="#8b8e8f" textLength="9.00" lengthAdjust="spacingAndGlyphs" >L:</text><text x="653.00" y="116.00" font-family="Liberation Sans" font-weight="400" font-size="12.71" fill="#8b8e8f" textLength="30.01" lengthAdjust="spacingAndGlyphs" >0,000</text><text x="764.00" y="117.00" font-family="Liberation Sans" font-weight="400" font-size="13.81" fill="#8b8e8f" textLength="11.00" lengthAdjust="spacingAndGlyphs" >H:</text><text x="791.00" y="116.00" font-family="Liberation Sans" font-weight="400" font-size="12.71" fill="#8b8e8f" textLength="30.01" lengthAdjust="spacingAndGlyphs" >0,000</text><text x="866.50" y="116.90" font-family="Liberation Sans" font-weight="400" font-size="11.93" fill="#2e3436" textLength="18.50" lengthAdjust="spacingAndGlyphs" >mm</text><text x="63.00" y="145.00" font-family="Liberation Sans" font-weight="400" font-size="9.89" fill="#555753" textLength="18.21" lengthAdjust="spacingAndGlyphs" >-550</text><text x="129.00" y="145.00" font-family="Liberation Sans" font-weight="400" font-size="9.89" fill="#555753" textLength="18.21" lengthAdjust="spacingAndGlyphs" >-500</text><text x="195.00" y="145.00" font-family="Liberation Sans" font-weight="400" font-size="9.89" fill="#555753" textLength="18.21" lengthAdjust="spacingAndGlyphs" >-450</text><text x="261.00" y="145.00" font-family="Liberation Sans" font-weight="400" font-size="9.89" fill="#555753" textLength="18.21" lengthAdjust="spacingAndGlyphs" >-400</text><text x="327.00" y="145.00" font-family="Liberation Sans" font-weight="400" font-size="9.89" fill="#555753" textLength="18.21" lengthAdjust="spacingAndGlyphs" >-350</text><text x="394.00" y="145.00" font-family="Liberation Sans" font-weight="400" font-size="9.89" fill="#555753" textLength="18.21" lengthAdjust="spacingAndGlyphs" >-300</text><text x="460.00" y="145.00" font-family="Liberation Sans" font-weight="400" font-size="9.89" fill="#555753" textLength="18.21" lengthAdjust="spacingAndGlyphs" >-250</text><text x="526.00" y="145.00" font-family="Liberation Sans" font-weight="400" font-size="9.89" fill="#555753" textLength="18.21" lengthAdjust="spacingAndGlyphs" >-200</text><text x="592.00" y="145.00" font-family="Liberation Sans" font-weight="400" font-size="9.89" fill="#555753" textLength="18.21" lengthAdjust="spacingAndGlyphs" >-150</text><text x="658.00" y="145.00" font-family="Liberation Sans" font-weight="400" font-size="9.89" fill="#555753" textLength="18.21" lengthAdjust="spacingAndGlyphs" >-100</text><text x="724.00" y="145.00" font-family="Liberation Sans" font-weight="400" font-size="9.89" fill="#555753" textLength="13.15" lengthAdjust="spacingAndGlyphs" >-50</text><text x="790.00" y="145.00" font-family="Liberation Sans" font-weight="400" font-size="9.89" fill="#555753" textLength="5.06" lengthAdjust="spacingAndGlyphs" >0</text><text x="857.00" y="145.00" font-family="Liberation Sans" font-weight="400" font-size="9.89" fill="#555753" textLength="10.12" lengthAdjust="spacingAndGlyphs" >50</text><text x="923.00" y="145.00" font-family="Liberation Sans" font-weight="400" font-size="9.89" fill="#555753" textLength="15.18" lengthAdjust="spacingAndGlyphs" >100</text><text x="989.00" y="145.00" font-family="Liberation Sans" font-weight="400" font-size="9.89" fill="#555753" textLength="15.18" lengthAdjust="spacingAndGlyphs" >150</text><text x="1055.00" y="145.00" font-family="Liberation Sans" font-weight="400" font-size="9.89" fill="#555753" textLength="15.18" lengthAdjust="spacingAndGlyphs" >200</text><text x="1121.00" y="145.00" font-family="Liberation Sans" font-weight="400" font-size="9.89" fill="#555753" textLength="15.18" lengthAdjust="spacingAndGlyphs" >250</text><text x="1187.00" y="145.00" font-family="Liberation Sans" font-weight="400" font-size="9.89" fill="#555753" textLength="15.18" lengthAdjust="spacingAndGlyphs" >300</text><text x="1253.00" y="145.00" font-family="Liberation Sans" font-weight="400" font-size="9.89" fill="#555753" textLength="15.18" lengthAdjust="spacingAndGlyphs" >350</text><text x="1320.00" y="145.00" font-family="Liberation Sans" font-weight="400" font-size="9.89" fill="#555753" textLength="15.18" lengthAdjust="spacingAndGlyphs" >400</text><text x="41.00" y="913.80" font-family="Liberation Sans" font-weight="400" font-size="9.20" fill="#555753" textLength="5.00" lengthAdjust="spacingAndGlyphs" >1</text><text x="41.00" y="923.10" font-family="Liberation Sans" font-weight="400" font-size="9.20" fill="#555753" textLength="5.00" lengthAdjust="spacingAndGlyphs" >0</text><text x="41.00" y="932.40" font-family="Liberation Sans" font-weight="400" font-size="9.20" fill="#555753" textLength="5.00" lengthAdjust="spacingAndGlyphs" >0</text><text x="41.00" y="774.80" font-family="Liberation Sans" font-weight="400" font-size="9.20" fill="#555753" textLength="5.00" lengthAdjust="spacingAndGlyphs" >0</text><text x="41.00" y="642.80" font-family="Liberation Sans" font-weight="400" font-size="9.20" fill="#555753" textLength="5.00" lengthAdjust="spacingAndGlyphs" >1</text><text x="41.00" y="652.10" font-family="Liberation Sans" font-weight="400" font-size="9.20" fill="#555753" textLength="5.00" lengthAdjust="spacingAndGlyphs" >0</text><text x="41.00" y="661.40" font-family="Liberation Sans" font-weight="400" font-size="9.20" fill="#555753" textLength="5.00" lengthAdjust="spacingAndGlyphs" >0</text><text x="41.00" y="509.80" font-family="Liberation Sans" font-weight="400" font-size="9.20" fill="#555753" textLength="5.00" lengthAdjust="spacingAndGlyphs" >2</text><text x="41.00" y="519.10" font-family="Liberation Sans" font-weight="400" font-size="9.20" fill="#555753" textLength="5.00" lengthAdjust="spacingAndGlyphs" >0</text><text x="41.00" y="528.40" font-family="Liberation Sans" font-weight="400" font-size="9.20" fill="#555753" textLength="5.00" lengthAdjust="spacingAndGlyphs" >0</text><text x="41.00" y="377.80" font-family="Liberation Sans" font-weight="400" font-size="9.20" fill="#555753" textLength="5.00" lengthAdjust="spacingAndGlyphs" >3</text><text x="41.00" y="387.10" font-family="Liberation Sans" font-weight="400" font-size="9.20" fill="#555753" textLength="5.00" lengthAdjust="spacingAndGlyphs" >0</text><text x="41.00" y="396.40" font-family="Liberation Sans" font-weight="400" font-size="9.20" fill="#555753" textLength="5.00" lengthAdjust="spacingAndGlyphs" >0</text><text x="41.00" y="244.80" font-family="Liberation Sans" font-weight="400" font-size="9.20" fill="#555753" textLength="5.00" lengthAdjust="spacingAndGlyphs" >4</text><text x="41.00" y="254.10" font-family="Liberation Sans" font-weight="400" font-size="9.20" fill="#555753" textLength="5.00" lengthAdjust="spacingAndGlyphs" >0</text><text x="41.00" y="263.40" font-family="Liberation Sans" font-weight="400" font-size="9.20" fill="#555753" textLength="5.00" lengthAdjust="spacingAndGlyphs" >0</text><text x="1398.20" y="156.20" font-family="Liberation Sans" font-weight="400" font-size="16.86" fill="#2e3436" textLength="235.20" lengthAdjust="spacingAndGlyphs" >Allinea e distribuisci (Maiusc+Ctrl+A)</text><text x="1389.00" y="184.00" font-family="Liberation Sans" font-weight="700" font-size="15.99" fill="#2e3436" textLength="88.40" lengthAdjust="spacingAndGlyphs" >Allineamento</text><text x="1578.20" y="216.00" font-family="Liberation Sans" font-weight="400" font-size="15.99" fill="#2e3436" textLength="64.89" lengthAdjust="spacingAndGlyphs" >Relativo a:</text><text x="1658.00" y="216.00" font-family="Liberation Sans" font-weight="400" font-size="15.99" fill="#2e3436" textLength="93.00" lengthAdjust="spacingAndGlyphs" >Area selezione</text><text x="1597.20" y="245.20" font-family="Liberation Sans" font-weight="400" font-size="16.57" fill="#2e3436" textLength="192.80" lengthAdjust="spacingAndGlyphs" >Tratta selezione come gruppo:</text><text x="1389.20" y="352.00" font-family="Liberation Sans" font-weight="700" font-size="15.41" fill="#2e3436" textLength="88.79" lengthAdjust="spacingAndGlyphs" >Distribuzione</text><text x="1389.20" y="461.40" font-family="Liberation Sans" font-weight="700" font-size="17.15" fill="#2e3436" textLength="88.10" lengthAdjust="spacingAndGlyphs" >Ordinamento</text><text x="1389.20" y="531.00" font-family="Liberation Sans" font-weight="700" font-size="17.44" fill="#2e3436" textLength="161.00" lengthAdjust="spacingAndGlyphs" >Rimuovi sovrapposizione</text><text x="1618.00" y="564.40" font-family="Liberation Sans" font-weight="400" font-size="17.01" fill="#2e3436" textLength="14.70" lengthAdjust="spacingAndGlyphs" >H:</text><text x="1647.30" y="564.00" font-family="Liberation Sans" font-weight="400" font-size="16.24" fill="#2e3436" textLength="19.50" lengthAdjust="spacingAndGlyphs" >0,0</text><text x="1699.00" y="564.40" font-family="Liberation Sans" font-weight="400" font-size="17.01" fill="#2e3436" textLength="12.50" lengthAdjust="spacingAndGlyphs" >V:</text><text x="1726.00" y="564.00" font-family="Liberation Sans" font-weight="400" font-size="16.24" fill="#2e3436" textLength="20.50" lengthAdjust="spacingAndGlyphs" >0,0</text><text x="1389.00" y="599.10" font-family="Liberation Sans" font-weight="700" font-size="15.70" fill="#2e3436" textLength="31.40" lengthAdjust="spacingAndGlyphs" >Nodi</text><text x="1584.00" y="631.50" font-family="Liberation Sans" font-weight="400" font-size="17.01" fill="#2e3436" textLength="65.29" lengthAdjust="spacingAndGlyphs" >Relativo a:</text><text x="1664.20" y="631.50" font-family="Liberation Sans" font-weight="400" font-size="16.72" fill="#2e3436" textLength="96.00" lengthAdjust="spacingAndGlyphs" >Metà selezione</text><text x="1398.30" y="719.00" font-family="Liberation Sans" font-weight="400" font-size="15.99" fill="#2e3436" textLength="254.01" lengthAdjust="spacingAndGlyphs" >Esporta immagine PNG (Maiusc+Ctrl+E)</text><text x="1388.30" y="750.00" font-family="Liberation Sans" font-weight="700" font-size="15.70" fill="#2e3436" textLength="118.10" lengthAdjust="spacingAndGlyphs" >Area da esportare</text><text x="1420.70" y="784.80" font-family="Liberation Sans" font-weight="400" font-size="17.30" fill="#2e3436" textLength="41.28" lengthAdjust="spacingAndGlyphs" >Pagina</text><text x="1521.90" y="784.80" font-family="Liberation Sans" font-weight="400" font-size="17.30" fill="#2e3436" textLength="52.50" lengthAdjust="spacingAndGlyphs" >Disegno</text><text x="1624.00" y="784.80" font-family="Liberation Sans" font-weight="400" font-size="17.30" fill="#2e3436" textLength="62.00" lengthAdjust="spacingAndGlyphs" >Selezione</text><text x="1716.40" y="784.80" font-family="Liberation Sans" font-weight="400" font-size="17.30" fill="#2e3436" textLength="91.29" lengthAdjust="spacingAndGlyphs" >Personalizzata</text><text x="1424.00" y="826.00" font-family="Liberation Sans" font-weight="400" font-size="15.99" fill="#2e3436" textLength="20.60" lengthAdjust="spacingAndGlyphs" >X0:</text><text x="1640.00" y="826.00" font-family="Liberation Sans" font-weight="400" font-size="15.99" fill="#2e3436" textLength="19.00" lengthAdjust="spacingAndGlyphs" >Y0:</text><text x="1510.00" y="826.00" font-family="Liberation Sans" font-weight="400" font-size="15.11" fill="#2e3436" textLength="35.81" lengthAdjust="spacingAndGlyphs" >0,000</text><text x="1717.30" y="826.00" font-family="Liberation Sans" font-weight="400" font-size="15.11" fill="#2e3436" textLength="35.81" lengthAdjust="spacingAndGlyphs" >0,000</text><text x="1424.00" y="867.00" font-family="Liberation Sans" font-weight="400" font-size="15.99" fill="#2e3436" textLength="20.60" lengthAdjust="spacingAndGlyphs" >X1:</text><text x="1640.00" y="867.00" font-family="Liberation Sans" font-weight="400" font-size="15.99" fill="#2e3436" textLength="19.00" lengthAdjust="spacingAndGlyphs" >Y1:</text><text x="1510.00" y="867.00" font-family="Liberation Sans" font-weight="400" font-size="15.11" fill="#2e3436" textLength="51.80" lengthAdjust="spacingAndGlyphs" >210,000</text><text x="1717.30" y="867.00" font-family="Liberation Sans" font-weight="400" font-size="15.11" fill="#2e3436" textLength="51.80" lengthAdjust="spacingAndGlyphs" >297,000</text><text x="1401.40" y="908.00" font-family="Liberation Sans" font-weight="400" font-size="15.99" fill="#2e3436" textLength="67.10" lengthAdjust="spacingAndGlyphs" >Larghezza:</text><text x="1625.40" y="908.00" font-family="Liberation Sans" font-weight="400" font-size="15.99" fill="#2e3436" textLength="49.60" lengthAdjust="spacingAndGlyphs" >Altezza:</text><text x="1510.00" y="908.00" font-family="Liberation Sans" font-weight="400" font-size="15.11" fill="#2e3436" textLength="51.80" lengthAdjust="spacingAndGlyphs" >210,000</text><text x="1717.30" y="908.00" font-family="Liberation Sans" font-weight="400" font-size="15.11" fill="#2e3436" textLength="51.80" lengthAdjust="spacingAndGlyphs" >297,000</text><text x="1707.00" y="948.00" font-family="Liberation Sans" font-weight="400" font-size="16.72" fill="#2e3436" textLength="35.70" lengthAdjust="spacingAndGlyphs" >Unità:</text><text x="1757.00" y="948.00" font-family="Liberation Sans" font-weight="400" font-size="11.34" fill="#2e3436" textLength="23.60" lengthAdjust="spacingAndGlyphs" >mm</text><text x="1388.30" y="982.20" font-family="Liberation Sans" font-weight="700" font-size="16.42" fill="#2e3436" textLength="146.70" lengthAdjust="spacingAndGlyphs" >Dimensione immagine</text><text x="3.00" y="1058.70" font-family="Liberation Sans" font-weight="400" font-size="11.92" fill="#2e3436" textLength="70.60" lengthAdjust="spacingAndGlyphs" >Riempimento:</text><text x="3.00" y="1074.50" font-family="Liberation Sans" font-weight="400" font-size="12.35" fill="#2e3436" textLength="49.30" lengthAdjust="spacingAndGlyphs" >Contorno:</text><text x="89.40" y="1058.70" font-family="Liberation Sans" font-weight="400" font-size="11.92" fill="#2e3436" textLength="20.30" lengthAdjust="spacingAndGlyphs" >N/D</text><text x="89.40" y="1074.50" font-family="Liberation Sans" font-weight="400" font-size="12.35" fill="#2e3436" textLength="20.30" lengthAdjust="spacingAndGlyphs" >N/D</text><text x="126.40" y="1066.40" font-family="Liberation Sans" font-weight="400" font-size="10.76" fill="#2e3436" textLength="10.80" lengthAdjust="spacingAndGlyphs" >O:</text><text x="151.50" y="1066.60" font-family="Liberation Sans" font-weight="400" font-size="11.02" fill="#8b8e8f" textLength="5.50" lengthAdjust="spacingAndGlyphs" >0</text><text x="259.80" y="1066.40" font-family="Liberation Sans" font-weight="700" font-size="12.21" fill="#2e3436" textLength="51.19" lengthAdjust="spacingAndGlyphs" >•Livello 1</text><text x="352.50" y="1067.75" font-family="Liberation Sans" font-weight="400" font-size="15.48" fill="#2e3436" textLength="850.50" lengthAdjust="spacingAndGlyphs" >Nessun oggetto selezionato. Clicca, Maiusc+Clic, Alt+scorrimento mouse sugli oggetti, o trascina attorno agli oggetti per selezionare.</text><text x="1781.00" y="1058.60" font-family="Liberation Sans" font-weight="400" font-size="12.50" fill="#2e3436" textLength="9.60" lengthAdjust="spacingAndGlyphs" >X:</text><text x="1781.00" y="1074.50" font-family="Liberation Sans" font-weight="400" font-size="12.35" fill="#2e3436" textLength="9.60" lengthAdjust="spacingAndGlyphs" >Y:</text><text x="1814.50" y="1058.60" font-family="Liberation Mono" font-weight="400" font-size="12.67" fill="#2e3436" textLength="26.50" lengthAdjust="spacingAndGlyphs" >0.00</text><text x="1814.50" y="1074.50" font-family="Liberation Mono" font-weight="400" font-size="12.52" fill="#2e3436" textLength="26.50" lengthAdjust="spacingAndGlyphs" >0.00</text><text x="1851.00" y="1066.60" font-family="Liberation Sans" font-weight="400" font-size="12.94" fill="#2e3436" textLength="9.50" lengthAdjust="spacingAndGlyphs" >Z:</text><text x="1880.60" y="1066.80" font-family="Liberation Sans" font-weight="400" font-size="13.14" fill="#2e3436" textLength="19.70" lengthAdjust="spacingAndGlyphs" >35%</text></svg><svg style="left:0;top:0;text-rendering:geometricPrecision;will-change:transform" width="1920" height="1012"><text x="1397.50" y="1012.80" font-family="Liberation Sans" font-weight="400" font-size="15.99" fill="#2e3436" textLength="66.90" lengthAdjust="spacingAndGlyphs" >Larghezza:</text><text x="1498.75" y="1012.80" font-family="Liberation Sans" font-weight="400" font-size="15.40" fill="#2e3436" textLength="23.16" lengthAdjust="spacingAndGlyphs" >744</text><text x="1605.00" y="1012.80" font-family="Liberation Sans" font-weight="400" font-size="15.99" fill="#2e3436" textLength="40.59" lengthAdjust="spacingAndGlyphs" >pixel a</text><text x="1679.40" y="1012.80" font-family="Liberation Sans" font-weight="400" font-size="15.40" fill="#2e3436" textLength="35.61" lengthAdjust="spacingAndGlyphs" >90,00</text><text x="1787.50" y="1012.80" font-family="Liberation Sans" font-weight="400" font-size="15.99" fill="#2e3436" textLength="18.11" lengthAdjust="spacingAndGlyphs" >dpi</text></svg>
</body></html>
